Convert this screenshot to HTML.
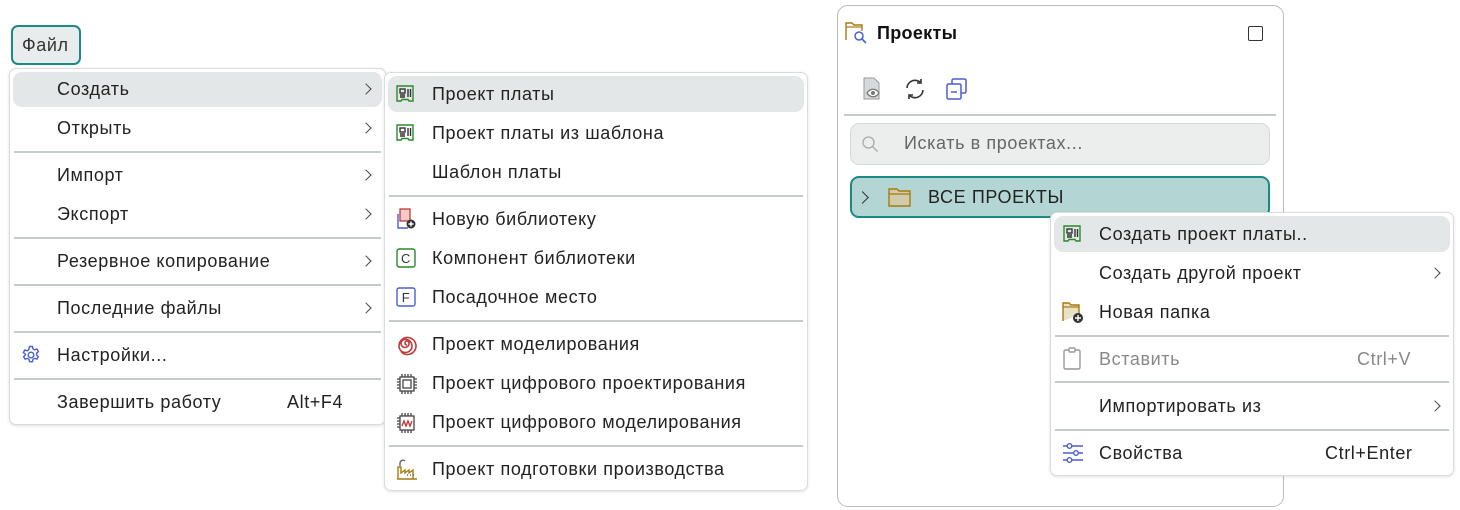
<!DOCTYPE html>
<html><head><meta charset="utf-8"><style>
*{box-sizing:border-box;margin:0;padding:0}
body{width:1460px;height:510px;background:#fff;position:relative;overflow:hidden;font-family:"Liberation Sans",sans-serif;font-size:18px;letter-spacing:0.6px;color:#222}
.a{position:absolute}
.menu{position:absolute;background:#fff;border:1px solid #d8dcdc;border-radius:7px;box-shadow:0 1px 3px rgba(0,0,0,.12)}
.hl{position:absolute;background:#e4e7e7;border-radius:9px}
.t{position:absolute;line-height:21px;white-space:nowrap}
.sep{position:absolute;height:2px;background:#c3cbcb}
.chev{position:absolute;width:8px;height:8px;border-right:1.5px solid #444;border-top:1.5px solid #444;transform:rotate(45deg)}
.ic{position:absolute}
</style></head><body>

<div class="a" style="left:11px;top:25px;width:70px;height:40px;border:2px solid #1a8a85;border-radius:7px;background:#e9ecec"></div>
<div class="t" style="left:22px;top:35px;color:#333">Файл</div>

<!-- menu1 -->
<div class="menu" style="left:9px;top:68px;width:377px;height:357px"></div>
<div class="hl" style="left:13px;top:72px;width:369px;height:35px"></div>
<div class="t" style="left:57px;top:79px">Создать</div><div class="chev" style="left:362px;top:85px"></div>
<div class="t" style="left:57px;top:118px">Открыть</div><div class="chev" style="left:362px;top:124px"></div>
<div class="sep" style="left:14px;top:151px;width:367px"></div>
<div class="t" style="left:57px;top:165px">Импорт</div><div class="chev" style="left:362px;top:171px"></div>
<div class="t" style="left:57px;top:204px">Экспорт</div><div class="chev" style="left:362px;top:210px"></div>
<div class="sep" style="left:14px;top:237px;width:367px"></div>
<div class="t" style="left:57px;top:251px">Резервное копирование</div><div class="chev" style="left:362px;top:257px"></div>
<div class="sep" style="left:14px;top:284px;width:367px"></div>
<div class="t" style="left:57px;top:298px">Последние файлы</div><div class="chev" style="left:362px;top:304px"></div>
<div class="sep" style="left:14px;top:331px;width:367px"></div>
<svg class="ic" style="left:21px;top:345px" width="20" height="20" viewBox="0 0 20 20" fill="none" stroke="#4a5fd0" stroke-width="1.4"><path d="M8.5 1.5h3l.5 2.4 1.6.9 2.3-.8 1.5 2.6-1.8 1.6v1.8l1.8 1.6-1.5 2.6-2.3-.8-1.6.9-.5 2.4h-3l-.5-2.4-1.6-.9-2.3.8-1.5-2.6 1.8-1.6V9.2L2.3 7.6 3.8 5l2.3.8 1.6-.9z"/><circle cx="10" cy="10" r="2.8"/></svg>
<div class="t" style="left:57px;top:345px">Настройки...</div>
<div class="sep" style="left:14px;top:378px;width:367px"></div>
<div class="t" style="left:57px;top:392px">Завершить работу</div>
<div class="t" style="left:287px;top:392px">Alt+F4</div>

<!-- menu2 -->
<div class="menu" style="left:384px;top:72px;width:424px;height:419px"></div>
<div class="hl" style="left:388px;top:76px;width:416px;height:36px"></div>
<svg class="ic" style="left:395px;top:84px" width="20" height="20" viewBox="0 0 20 20" fill="none" stroke="#2a8a2a" stroke-width="1.4"><path d="M2 2h16v15h-4l-1-1.5H7L6 17H2z"/><rect x="5" y="5" width="5" height="4" stroke="#333"/><path d="M5 11h5M5 13h5M13 5v8M15.5 5v8" stroke="#333"/></svg>
<div class="t" style="left:432px;top:84px">Проект платы</div>
<svg class="ic" style="left:395px;top:123px" width="20" height="20" viewBox="0 0 20 20" fill="none" stroke="#2a8a2a" stroke-width="1.4"><path d="M2 2h16v15h-4l-1-1.5H7L6 17H2z"/><rect x="5" y="5" width="5" height="4" stroke="#333"/><path d="M5 11h5M5 13h5M13 5v8M15.5 5v8" stroke="#333"/></svg>
<div class="t" style="left:432px;top:123px">Проект платы из шаблона</div>
<div class="t" style="left:432px;top:162px">Шаблон платы</div>
<div class="sep" style="left:389px;top:195px;width:414px"></div>
<svg class="ic" style="left:396px;top:208px" width="22" height="22" viewBox="0 0 22 22"><rect x="4" y="1" width="10" height="12" fill="#f6c9c9" stroke="#c03a3a" stroke-width="1.3"/><path d="M2 6v14h10" fill="none" stroke="#4a5fd0" stroke-width="1.4"/><circle cx="15" cy="16" r="4.5" fill="#333"/><path d="M15 13.5v5M12.5 16h5" stroke="#fff" stroke-width="1.4"/></svg>
<div class="t" style="left:432px;top:209px">Новую библиотеку</div>
<svg class="ic" style="left:396px;top:248px" width="20" height="20" viewBox="0 0 20 20"><rect x="1" y="1" width="18" height="18" rx="2" fill="none" stroke="#2a8a2a" stroke-width="1.4"/><text x="10" y="15" font-size="13" text-anchor="middle" fill="#333" font-family="Liberation Sans">C</text></svg>
<div class="t" style="left:432px;top:248px">Компонент библиотеки</div>
<svg class="ic" style="left:396px;top:287px" width="20" height="20" viewBox="0 0 20 20"><rect x="1" y="1" width="18" height="18" rx="2" fill="none" stroke="#4a5fd0" stroke-width="1.4"/><text x="10" y="15" font-size="13" text-anchor="middle" fill="#333" font-family="Liberation Sans">F</text></svg>
<div class="t" style="left:432px;top:287px">Посадочное место</div>
<div class="sep" style="left:389px;top:320px;width:414px"></div>
<svg class="ic" style="left:396px;top:334px" width="22" height="22" viewBox="0 0 22 22" fill="none" stroke="#c03a3a" stroke-width="1.6"><path d="M11 11a2 2 0 1 1 2-2M13 9a4 4 0 1 1-4-3.5M9 5.5a6.5 6.5 0 1 1-6 6.5M3 12a8.5 8.5 0 1 1 2 5.5"/></svg>
<div class="t" style="left:432px;top:334px">Проект моделирования</div>
<svg class="ic" style="left:396px;top:373px" width="22" height="22" viewBox="0 0 22 22" fill="none" stroke="#444" stroke-width="1.3"><rect x="4" y="4" width="14" height="14"/><rect x="7" y="7" width="8" height="8"/><path d="M6 1v3M9 1v3M12 1v3M15 1v3M6 18v3M9 18v3M12 18v3M15 18v3M1 6h3M1 9h3M1 12h3M1 15h3M18 6h3M18 9h3M18 12h3M18 15h3"/></svg>
<div class="t" style="left:432px;top:373px">Проект цифрового проектирования</div>
<svg class="ic" style="left:396px;top:412px" width="22" height="22" viewBox="0 0 22 22" fill="none" stroke="#444" stroke-width="1.3"><rect x="4" y="4" width="14" height="14"/><path d="M6 1v3M9 1v3M12 1v3M15 1v3M6 18v3M9 18v3M12 18v3M15 18v3M1 6h3M1 9h3M1 12h3M1 15h3" /><path d="M6 14l2-5 2 5 2-5 2 5 2-5" stroke="#c03a3a" stroke-width="1.4"/></svg>
<div class="t" style="left:432px;top:412px">Проект цифрового моделирования</div>
<div class="sep" style="left:389px;top:445px;width:414px"></div>
<svg class="ic" style="left:396px;top:457px" width="22" height="24" viewBox="0 0 22 24" fill="none" stroke="#a87a10" stroke-width="1.4"><path d="M2 22V10h3v6l4-3v3l4-3v3l4-3v9zM1 22h20"/><path d="M4 9V6a3 3 0 0 1 5-2" stroke="#666"/><path d="M11 18h1M14 18h1M17 18h1" stroke="#666"/></svg>
<div class="t" style="left:432px;top:459px">Проект подготовки производства</div>

<!-- panel -->
<div class="a" style="left:837px;top:5px;width:447px;height:502px;border:1.5px solid #b8bcbc;border-radius:11px;background:#fff"></div>
<svg class="ic" style="left:845px;top:21px" width="24" height="24" viewBox="0 0 24 24" fill="none"><path d="M1 19V2h6l2 2h8v6" stroke="#a87a10" stroke-width="1.4"/><path d="M1 6h16" stroke="#a87a10" stroke-width="1.2"/><circle cx="14" cy="15" r="4" stroke="#4a5fd0" stroke-width="1.5"/><path d="M17 18l4 4" stroke="#4a5fd0" stroke-width="1.6"/></svg>
<div class="t" style="left:877px;top:23px;font-weight:bold;color:#111;letter-spacing:0.3px">Проекты</div>
<div class="a" style="left:1248px;top:26px;width:15px;height:15px;border:1.5px solid #333;border-radius:2px"></div>
<svg class="ic" style="left:862px;top:77px" width="22" height="24" viewBox="0 0 22 24"><path d="M2 1h10l5 5v16H2z" fill="#d6d9d9" stroke="#999" stroke-width="1"/><path d="M5 16c3-5 9-5 12 0-3 5-9 5-12 0z" fill="#fff" stroke="#777" stroke-width="1.3"/><circle cx="11" cy="16" r="2" fill="#777"/></svg>
<svg class="ic" style="left:903px;top:77px" width="24" height="24" viewBox="0 0 24 24" fill="none" stroke="#333" stroke-width="1.6"><path d="M4 11a8 8 0 0 1 14-5M20 13a8 8 0 0 1-14 5"/><path d="M18 2v4h-4M6 22v-4h4"/></svg>
<svg class="ic" style="left:945px;top:77px" width="24" height="24" viewBox="0 0 24 24" fill="none" stroke="#4a5fd0" stroke-width="1.5"><rect x="7" y="2" width="14" height="14" rx="1.5"/><rect x="2" y="7" width="14" height="15" rx="1.5" fill="#fff"/><path d="M6 15h6"/></svg>
<div class="sep" style="left:844px;top:114px;width:432px"></div>
<div class="a" style="left:850px;top:123px;width:420px;height:42px;background:#eceeee;border:1.5px solid #d4dada;border-radius:9px"></div>
<svg class="ic" style="left:861px;top:135px" width="18" height="18" viewBox="0 0 18 18" fill="none" stroke="#aaa" stroke-width="1.3"><circle cx="7.5" cy="7.5" r="5.5"/><path d="M11.5 11.5l5 5"/></svg>
<div class="t" style="left:904px;top:133px;color:#666">Искать в проектах...</div>
<div class="a" style="left:850px;top:176px;width:420px;height:42px;background:#b3d5d3;border:2px solid #1a8a85;border-radius:9px"></div>
<div class="chev" style="left:858px;top:193px;width:9px;height:9px;border-color:#333"></div>
<svg class="ic" style="left:888px;top:186px" width="24" height="22" viewBox="0 0 24 22"><path d="M1 3h8l2 2h11v15H1z" fill="#d0ccaa" stroke="#a87a10" stroke-width="1.4"/><path d="M1 8h21" stroke="#a87a10" stroke-width="1.2"/></svg>
<div class="t" style="left:928px;top:187px">ВСЕ ПРОЕКТЫ</div>

<!-- context menu -->
<div class="menu" style="left:1050px;top:212px;width:404px;height:264px"></div>
<div class="hl" style="left:1054px;top:216px;width:396px;height:36px"></div>
<svg class="ic" style="left:1062px;top:224px" width="20" height="20" viewBox="0 0 20 20" fill="none" stroke="#2a8a2a" stroke-width="1.4"><path d="M2 2h16v15h-4l-1-1.5H7L6 17H2z"/><rect x="5" y="5" width="5" height="4" stroke="#333"/><path d="M5 11h5M5 13h5M13 5v8M15.5 5v8" stroke="#333"/></svg>
<div class="t" style="left:1099px;top:224px">Создать проект платы..</div>
<div class="t" style="left:1099px;top:263px">Создать другой проект</div><div class="chev" style="left:1431px;top:269px"></div>
<svg class="ic" style="left:1062px;top:301px" width="24" height="24" viewBox="0 0 24 24"><path d="M1 20V2h6l2 2h8v10" fill="#e8e1c4" stroke="#a87a10" stroke-width="1.4"/><path d="M1 6h16" stroke="#a87a10" stroke-width="1.2"/><circle cx="16" cy="17" r="5" fill="#333"/><path d="M16 14v6M13 17h6" stroke="#fff" stroke-width="1.4"/></svg>
<div class="t" style="left:1099px;top:302px">Новая папка</div>
<div class="sep" style="left:1055px;top:335px;width:394px"></div>
<svg class="ic" style="left:1062px;top:347px" width="20" height="24" viewBox="0 0 20 24" fill="none" stroke="#999" stroke-width="1.4"><rect x="2" y="3" width="16" height="19" rx="1.5"/><rect x="7" y="1" width="6" height="4" rx="1" fill="#fff"/></svg>
<div class="t" style="left:1099px;top:349px;color:#888">Вставить</div>
<div class="t" style="left:1357px;top:349px;color:#888">Ctrl+V</div>
<div class="sep" style="left:1055px;top:381px;width:394px"></div>
<div class="t" style="left:1099px;top:396px">Импортировать из</div><div class="chev" style="left:1431px;top:402px"></div>
<div class="sep" style="left:1055px;top:429px;width:394px"></div>
<svg class="ic" style="left:1062px;top:442px" width="22" height="22" viewBox="0 0 22 22" fill="none" stroke="#4a5fd0" stroke-width="1.4"><path d="M1 4h4M10 4h11M1 11h11M16 11h5M1 18h4M10 18h11"/><circle cx="7.5" cy="4" r="2.3"/><circle cx="14" cy="11" r="2.3"/><circle cx="7.5" cy="18" r="2.3"/></svg>
<div class="t" style="left:1099px;top:443px">Свойства</div>
<div class="t" style="left:1325px;top:443px">Ctrl+Enter</div>
</body></html>
